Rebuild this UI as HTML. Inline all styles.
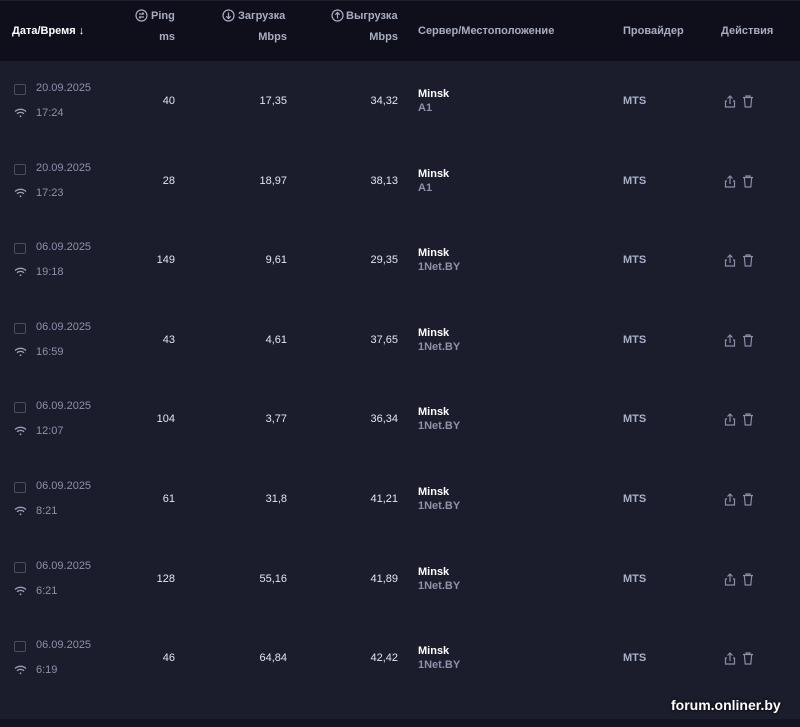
<!DOCTYPE html>
<html><head><meta charset="utf-8"><style>
*{margin:0;padding:0;box-sizing:border-box}
body{width:800px;height:727px;background:#1b1c2c;font-family:"Liberation Sans",sans-serif;position:relative;overflow:hidden}
.hdr{position:absolute;left:0;top:0;width:800px;height:61px;background:#0e0f1b;border-top:1px solid #1d1e2c}
.t{position:absolute;font-size:11px;white-space:nowrap}
.h{color:#a8adc0;font-weight:bold}
.r{text-align:right}
.num{color:#e4e5ee;font-size:11px}
.gr{color:#8d92aa}
.cb{position:absolute;width:12px;height:11px;border:1.5px solid #4a4d60;border-radius:2px}
.ic{position:absolute}
</style></head><body>
<div class="hdr"></div>
<div class="t" style="left:12px;top:25px;color:#fff;font-weight:bold">Дата/Время ↓</div>
<svg class="ic" style="left:135px;top:9px" width="13" height="13" viewBox="0 0 13 13" fill="none" stroke="#a8adc0" stroke-width="1.2"><circle cx="6.5" cy="6.5" r="5.5"/><path d="M4 5h5M7.5 3.5L9 5M9 8H4M5.5 9.5L4 8"/></svg>
<div class="t h" style="left:151px;top:10px">Ping</div>
<div class="t h r" style="right:625px;top:31px">ms</div>
<svg class="ic" style="left:222px;top:9px" width="13" height="13" viewBox="0 0 13 13" fill="none" stroke="#a8adc0" stroke-width="1.2"><circle cx="6.5" cy="6.5" r="5.5"/><path d="M6.5 3.5v6M4.3 7.3l2.2 2.2 2.2-2.2"/></svg>
<div class="t h" style="left:238px;top:10px">Загрузка</div>
<div class="t h r" style="right:513px;top:31px">Mbps</div>
<svg class="ic" style="left:331px;top:9px" width="13" height="13" viewBox="0 0 13 13" fill="none" stroke="#a8adc0" stroke-width="1.2"><circle cx="6.5" cy="6.5" r="5.5"/><path d="M6.5 9.5v-6M4.3 5.7l2.2-2.2 2.2 2.2"/></svg>
<div class="t h" style="left:346px;top:10px">Выгрузка</div>
<div class="t h r" style="right:402px;top:31px">Mbps</div>
<div class="t h" style="left:418px;top:25px">Сервер/Местоположение</div>
<div class="t h" style="left:623px;top:25px">Провайдер</div>
<div class="t h" style="left:721px;top:25px">Действия</div>

<div id="rows"></div>
<div style="position:absolute;left:0;top:719px;width:800px;height:8px;background:#141522"></div>
<div class="t" style="left:671px;top:697px;color:#fff;font-weight:bold;font-size:14px;text-shadow:0 0 3px #000">forum.onliner.by</div>
<script>
var d=[["20.09.2025","17:24","40","17,35","34,32","A1"],["20.09.2025","17:23","28","18,97","38,13","A1"],["06.09.2025","19:18","149","9,61","29,35","1Net.BY"],["06.09.2025","16:59","43","4,61","37,65","1Net.BY"],["06.09.2025","12:07","104","3,77","36,34","1Net.BY"],["06.09.2025","8:21","61","31,8","41,21","1Net.BY"],["06.09.2025","6:21","128","55,16","41,89","1Net.BY"],["06.09.2025","6:19","46","64,84","42,42","1Net.BY"]];
var h="";
d.forEach(function(r,i){var c=Math.round(102+i*79.6);
h+='<div class="cb" style="left:14px;top:'+(c-18)+'px"></div>';
h+='<div class="t gr" style="left:36px;top:'+(c-20)+'px">'+r[0]+'</div>';
h+='<svg class="ic" style="left:14px;top:'+(c+6)+'px" width="13" height="10" viewBox="0 0 13 10" fill="none" stroke="#9aa0b8" stroke-width="1.3"><path d="M1 3.5a8 8 0 0 1 11 0M3 5.8a5 5 0 0 1 7 0"/><circle cx="6.5" cy="8.3" r="0.9" fill="#9aa0b8" stroke="none"/></svg>';
h+='<div class="t gr" style="left:36px;top:'+(c+5)+'px">'+r[1]+'</div>';
h+='<div class="t num r" style="right:625px;top:'+(c-7)+'px">'+r[2]+'</div>';
h+='<div class="t num r" style="right:513px;top:'+(c-7)+'px">'+r[3]+'</div>';
h+='<div class="t num r" style="right:402px;top:'+(c-7)+'px">'+r[4]+'</div>';
h+='<div class="t" style="left:418px;top:'+(c-14)+'px;color:#fff;font-weight:bold">Minsk</div>';
h+='<div class="t gr" style="left:418px;top:'+(c)+'px;font-weight:bold">'+r[5]+'</div>';
h+='<div class="t" style="left:623px;top:'+(c-7)+'px;color:#a8b0c8;font-weight:bold">MTS</div>';
h+='<svg class="ic" style="left:724px;top:'+(c-7)+'px" width="12" height="13" viewBox="0 0 12 13" fill="none" stroke="#8a8fa5" stroke-width="1.2"><path d="M6 1v8M3.5 3.5L6 1l2.5 2.5M3 6H1.5v6h9V6H9"/></svg>';
h+='<svg class="ic" style="left:742px;top:'+(c-7)+'px" width="12" height="13" viewBox="0 0 12 13" fill="none" stroke="#8a8fa5" stroke-width="1.2"><path d="M1 2.5h10M4 2.5V1h4v1.5M2.3 2.5l.9 9.5h5.6l.9-9.5"/></svg>';
});
document.getElementById("rows").innerHTML=h;
</script>
</body></html>
